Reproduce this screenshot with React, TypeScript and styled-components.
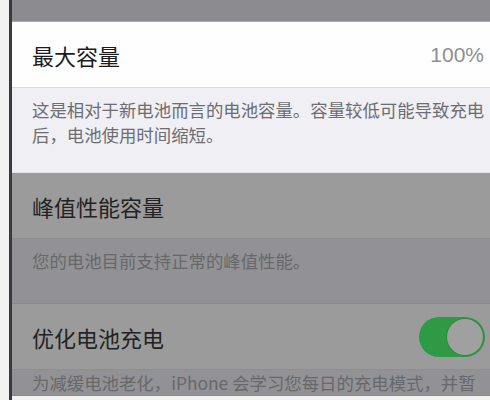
import React from 'react';
import styled, { createGlobalStyle, css } from 'styled-components';

type Tone = 'light' | 'dim';

const GlobalStyle = createGlobalStyle`
  html, body {
    margin: 0;
    padding: 0;
    width: 490px;
    height: 400px;
    overflow: hidden;
    background: #f3f3f3;
    font-family: "Noto Sans CJK SC", "Noto Sans", sans-serif;
  }
`;

const Frame = styled.div`
  display: flex;
  width: 490px;
  height: 400px;
  overflow: hidden;
`;

const Bezel = styled.div`
  width: 9px;
  flex-shrink: 0;
  background: #f2f2f2;
  border-right: 3px solid #3a3a3c;
`;

const Screen = styled.div`
  flex: 1;
  display: flex;
  flex-direction: column;
  min-width: 0;

  & > * {
    flex-shrink: 0;
  }
`;

const TopBand = styled.div`
  height: 21px;
  background: #8c8c90;
  border-bottom: 1px solid #a9a9ad;
`;

const Row = styled.div<{ $tone: Tone }>`
  height: 65px;
  display: flex;
  align-items: center;
  justify-content: space-between;
  padding: 0 5px 0 20px;
  ${(p) =>
    p.$tone === 'light'
      ? css`
          background: #fefefe;
          border-bottom: 1px solid #d9d9de;
        `
      : css`
          background: #9b9b9b;
          border-bottom: 1px solid #8d8d8f;
        `}
`;

const Title = styled.span<{ $tone: Tone }>`
  font-size: 22px;
  font-weight: 400;
  color: ${(p) => (p.$tone === 'light' ? '#1c1c1e' : '#232323')};
`;

const Value = styled.span`
  font-family: "Liberation Sans", Arial, sans-serif;
  font-size: 21px;
  color: #8e8e93;
  padding-right: 1px;
`;

const Footer = styled.p<{ $tone: Tone; $top?: number }>`
  margin: 0;
  padding: ${(p) => p.$top ?? 9}px 0 0 20px;
  font-size: 17.4px;
  line-height: 25px;
  ${(p) =>
    p.$tone === 'light'
      ? css`
          background: #efeff4;
          color: #6d6d72;
          border-bottom: 1px solid #e2e2e6;
        `
      : css`
          background: #929296;
          color: #68686a;
          border-bottom: 1px solid #8a8a8c;
        `}
`;

const Toggle = styled.div`
  width: 66px;
  height: 40px;
  border-radius: 20px;
  background: #2e9a46;
  display: flex;
  justify-content: flex-end;
  align-items: center;
  padding: 2px;
  box-sizing: border-box;
`;

const Knob = styled.div`
  width: 36px;
  height: 36px;
  border-radius: 50%;
  background: #a0a0a0;
  box-shadow: 0 0 0 1px #2a8a3e;
`;

export default function App() {
  return (
    <>
      <GlobalStyle />
      <Frame>
        <Bezel />
        <Screen>
          <TopBand />
          <Row $tone="light">
            <Title $tone="light">最大容量</Title>
            <Value>100%</Value>
          </Row>
          <Footer $tone="light" style={{ height: 75 }}>
            这是相对于新电池而言的电池容量。容量较低可能导致充电后，电池使用时间缩短。
          </Footer>
          <Row $tone="dim">
            <Title $tone="dim">峰值性能容量</Title>
          </Row>
          <Footer $tone="dim" style={{ height: 55 }}>
            您的电池目前支持正常的峰值性能。
          </Footer>
          <Row $tone="dim">
            <Title $tone="dim">优化电池充电</Title>
            <Toggle>
              <Knob />
            </Toggle>
          </Row>
          <Footer $tone="dim" $top={0}>
            为减缓电池老化，iPhone 会学习您每日的充电模式，并暂
          </Footer>
        </Screen>
      </Frame>
    </>
  );
}
